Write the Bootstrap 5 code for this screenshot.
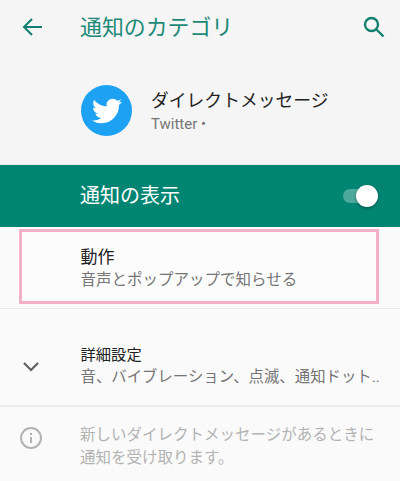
<!DOCTYPE html>
<html lang="ja">
<head>
<meta charset="utf-8">
<title>通知のカテゴリ</title>
<link rel="stylesheet" href="https://cdn.jsdelivr.net/npm/bootstrap@5.3.0/dist/css/bootstrap.min.css">
<style>
html,body{height:481px;overflow:hidden}
body{background:#fafafa;font-family:"Roboto","Noto Sans CJK JP",sans-serif;color:#212121}
.upper{background:#f5f5f5;height:165px;border-bottom:1px solid #e4e9e8}
.appbar{height:54px;padding:0 15px 0 22px}
.appbar-back{width:58px}
.appbar-title{font-size:21.9px;color:#1d8a79;line-height:1;padding-top:1px}
.appinfo{padding:31px 0 0 81px;gap:19px}
.logo{width:51px;height:51px;background:#1da1f2}
.appname{font-size:17.8px;line-height:24px;margin-top:4px}
.appsub{font-size:15px;line-height:20px;color:#757575;margin-top:1px}
.switchbar{height:62px;background:#008573;color:#fff;padding:0 23px 0 80px;font-size:20px}
.track{width:34px;height:14px;background:#4da99c;border-radius:7px}
.thumb{position:absolute;right:-1px;top:-4px;width:22px;height:22px;border-radius:50%;background:#fff;box-shadow:0 1px 3px rgba(0,0,0,.4)}
.picked{margin:2px 21px 0 19px;height:75px;border:3px solid #f4afc9;padding:13px 0 0 58.5px;background:#fcfcfc}
.rowtitle{font-size:17px;line-height:24px}
.rowsub{font-size:15.5px;line-height:22px;color:#757575}
.rule{height:2px;background:#ececec}
.firstrule{margin-top:4px;height:1px;background:#e6e6e6}
.details{height:96px;padding-top:35px}
.iconcol{width:80.5px;padding-left:22px}
.chev{margin-top:17px}
.dtitle{font-size:15.3px;line-height:22px}
.dsub{font-size:15.4px;line-height:22px;color:#757575;white-space:nowrap}
.notehold{padding-top:18px}
.noteicon{padding-left:20px;width:80px}
.note{font-size:15.5px;line-height:23px;color:#b3b3b3;margin-top:-1px}
</style>
</head>
<body>
<div class="upper">
  <div class="appbar d-flex align-items-center">
    <div class="appbar-back d-flex">
      <svg width="20" height="20" viewBox="0 0 20 20" fill="none" stroke="#137f70" stroke-width="2"><path d="M20 10H2M10 2l-8 8 8 8"/></svg>
    </div>
    <div class="appbar-title flex-grow-1">通知のカテゴリ</div>
    <svg width="22" height="22" viewBox="0 0 22 22" fill="none" stroke="#137f70" stroke-width="2.4"><circle cx="8.5" cy="8.5" r="6.5"/><path d="M13.5 13.5l7 7"/></svg>
  </div>
  <div class="appinfo d-flex">
    <div class="logo rounded-circle d-flex align-items-center justify-content-center flex-shrink-0">
      <svg width="30" height="30" viewBox="0 0 24 24" fill="#fff"><path d="M23.953 4.57a10 10 0 01-2.825.775 4.958 4.958 0 002.163-2.723c-.951.555-2.005.959-3.127 1.184a4.92 4.92 0 00-8.384 4.482C7.69 8.095 4.067 6.13 1.64 3.162a4.822 4.822 0 00-.666 2.475c0 1.71.87 3.213 2.188 4.096a4.904 4.904 0 01-2.228-.616v.06a4.923 4.923 0 003.946 4.827 4.996 4.996 0 01-2.212.085 4.936 4.936 0 004.604 3.417 9.867 9.867 0 01-6.102 2.105c-.39 0-.779-.023-1.17-.067a13.995 13.995 0 007.557 2.209c9.053 0 13.998-7.496 13.998-13.985 0-.21 0-.42-.015-.63A9.935 9.935 0 0024 4.59z"/></svg>
    </div>
    <div>
      <div class="appname">ダイレクトメッセージ</div>
      <div class="appsub">Twitter •</div>
    </div>
  </div>
</div>
<div class="switchbar d-flex align-items-center justify-content-between">
  <span>通知の表示</span>
  <div class="track position-relative"><div class="thumb"></div></div>
</div>
<div class="picked">
  <div class="rowtitle">動作</div>
  <div class="rowsub">音声とポップアップで知らせる</div>
</div>
<div class="firstrule"></div>
<div class="details d-flex">
  <div class="iconcol">
    <svg class="chev" width="18" height="12" viewBox="0 0 18 12" fill="none" stroke="#616161" stroke-width="2.2"><path d="M2 2l7 7 7-7"/></svg>
  </div>
  <div>
    <div class="dtitle">詳細設定</div>
    <div class="dsub">音、バイブレーション、点滅、通知ドット..</div>
  </div>
</div>
<div class="rule"></div>
<div class="notehold d-flex">
  <div class="iconcol noteicon">
    <svg width="22" height="22" viewBox="0 0 22 22" fill="none" stroke="#b3b3b3" stroke-width="2"><circle cx="11" cy="11" r="10"/><path d="M11 10v6M11 6v2"/></svg>
  </div>
  <div class="note">新しいダイレクトメッセージがあるときに<br>通知を受け取ります。</div>
</div>
</body>
</html>
